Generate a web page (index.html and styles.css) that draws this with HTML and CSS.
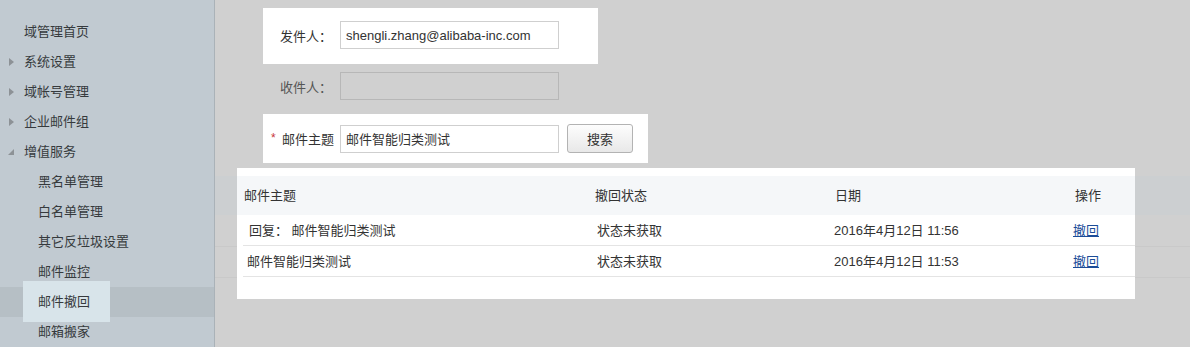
FILE: index.html
```html
<!DOCTYPE html>
<html lang="zh-CN">
<head>
    <meta charset="UTF-8">
    <title>邮件撤回</title>
    <link rel="stylesheet" href="styles.css">
</head>
<body>
    <div class="page">
        <!-- left menu -->
        <div class="sidebar">
            <div class="menu-item">域管理首页</div>
            <div class="menu-item"><span class="arrow"></span>系统设置</div>
            <div class="menu-item"><span class="arrow"></span>域帐号管理</div>
            <div class="menu-item"><span class="arrow"></span>企业邮件组</div>
            <div class="menu-item"><span class="arrow open"></span>增值服务</div>
            <div class="menu-item sub">黑名单管理</div>
            <div class="menu-item sub">白名单管理</div>
            <div class="menu-item sub">其它反垃圾设置</div>
            <div class="menu-item sub">邮件监控</div>
            <div class="menu-item sub active"><span class="spot-label">邮件撤回</span></div>
            <div class="menu-item sub">邮箱搬家</div>
        </div>

        <div class="main">
            <div class="form-row spot row-sender">
                <label class="field-label">发件人：</label>
                <input type="text" class="field-input" value="shengli.zhang@alibaba-inc.com">
            </div>
            <div class="form-row row-receiver">
                <label class="field-label">收件人：</label>
                <input type="text" class="field-input" disabled>
            </div>
            <div class="form-row spot row-subject">
                <span class="required">*</span>
                <label class="field-label short">邮件主题</label>
                <input type="text" class="field-input" value="邮件智能归类测试">
                <button class="search-btn">搜索</button>
            </div>

            <!-- results -->
            <div class="result-wrap">
                <div class="result-spot">
                    <div class="result-head">
                        <div>邮件主题</div>
                        <div>撤回状态</div>
                        <div>日期</div>
                        <div class="op">操作</div>
                    </div>
                    <div class="result-row">
                        <div class="subject-reply">回复： 邮件智能归类测试</div>
                        <div>状态未获取</div>
                        <div>2016年4月12日 11:56</div>
                        <div><a href="#">撤回</a></div>
                    </div>
                    <div class="result-row">
                        <div>邮件智能归类测试</div>
                        <div>状态未获取</div>
                        <div>2016年4月12日 11:53</div>
                        <div><a href="#">撤回</a></div>
                    </div>
                </div>
            </div>
        </div>
    </div>
</body>
</html>
```

FILE: styles.css
```css
body {
    margin: 0;
    padding: 0;
    font-family: "Liberation Sans", "Noto Sans CJK SC", sans-serif;
    font-size: 13px;
    color: #333;
    background-color: #d0d0d0;
}

.page {
    display: flex;
    height: 347px;
    overflow: hidden;
}

/* Sidebar menu */
.sidebar {
    width: 214px;
    flex-shrink: 0;
    background-color: #c1cad1;
    border-right: 1px solid #aab2b8;
    padding-top: 17px;
    box-sizing: content-box;
}

.menu-item {
    position: relative;
    height: 30px;
    line-height: 30px;
    padding-left: 24px;
    color: #363a3d;
}

.menu-item.sub {
    padding-left: 38px;
}

.menu-item.active {
    background-color: #b6bfc5;
}

.spot-label {
    position: absolute;
    left: 23px;
    top: -6px;
    width: 87px;
    height: 41px;
    line-height: 41px;
    padding-left: 15px;
    box-sizing: border-box;
    background-color: #d8e4ea;
}

.arrow {
    position: absolute;
    left: 9px;
    top: 11px;
    width: 0;
    height: 0;
    border-left: 5px solid #8d9296;
    border-top: 4px solid transparent;
    border-bottom: 4px solid transparent;
}

.arrow.open {
    left: 8px;
    top: 12px;
    border-top: none;
    border-left: 6px solid transparent;
    border-bottom: 6px solid #8d9296;
}

/* Main area */
.main {
    flex: 1;
    padding-top: 8px;
}

.form-row {
    display: flex;
    align-items: center;
    margin-left: 48px;
}

.spot {
    background-color: #fff;
}

.row-sender {
    width: 335px;
    padding: 13px 0 15px 17px;
    box-sizing: border-box;
}

.row-receiver {
    padding: 8px 0 14px 17px;
    color: #555;
}

.row-subject {
    width: 385px;
    padding: 10px 0 10px 8px;
    box-sizing: border-box;
}

.field-label {
    width: 60px;
    flex-shrink: 0;
}

.field-label.short {
    width: 58px;
}

.required {
    color: #c8353a;
    width: 11px;
    font-size: 12px;
    margin-top: -2px;
}

.field-input {
    width: 219px;
    height: 28px;
    box-sizing: border-box;
    border: 1px solid #cfcfcf;
    padding: 0 5px;
    font-family: "Liberation Sans", "Noto Sans CJK SC", sans-serif;
    font-size: 13px;
    color: #333;
    background-color: #fff;
}

.field-input:disabled {
    background-color: #d0d0d0;
    border-color: #b7b7b7;
}

.search-btn {
    margin-left: 8px;
    width: 66px;
    height: 29px;
    border: 1px solid #b3b3b3;
    border-radius: 3px;
    background: linear-gradient(#fdfdfd, #e8e8e8);
    font-family: "Liberation Sans", "Noto Sans CJK SC", sans-serif;
    font-size: 13px;
    color: #333;
}

/* Result table */
.result-wrap {
    margin-top: 5px;
    padding-left: 22px;
    height: 131px;
    background-image:
        linear-gradient(#c9c9c9, #c9c9c9),
        linear-gradient(#c9c9c9, #c9c9c9),
        linear-gradient(#cccfd1, #cccfd1);
    background-size: 100% 1px, 100% 1px, 100% 39px;
    background-position: 0 78px, 0 109px, 0 8px;
    background-repeat: no-repeat;
}

.result-spot {
    width: 898px;
    height: 131px;
    padding-top: 8px;
    box-sizing: border-box;
    background-color: #fff;
}

.result-head {
    display: grid;
    grid-template-columns: 351px 240px 240px 1fr;
    height: 39px;
    line-height: 39px;
    padding-left: 7px;
    background-color: #f5f7f9;
    color: #333;
}

.result-row {
    display: grid;
    grid-template-columns: 350px 237px 239px 1fr;
    height: 31px;
    line-height: 31px;
    margin-left: 6px;
    padding-left: 4px;
    border-bottom: 1px solid #e4e4e4;
    box-sizing: border-box;
}

.subject-reply {
    padding-left: 2px;
}

.result-row a {
    color: #1b4c98;
    text-decoration: underline;
}
```
